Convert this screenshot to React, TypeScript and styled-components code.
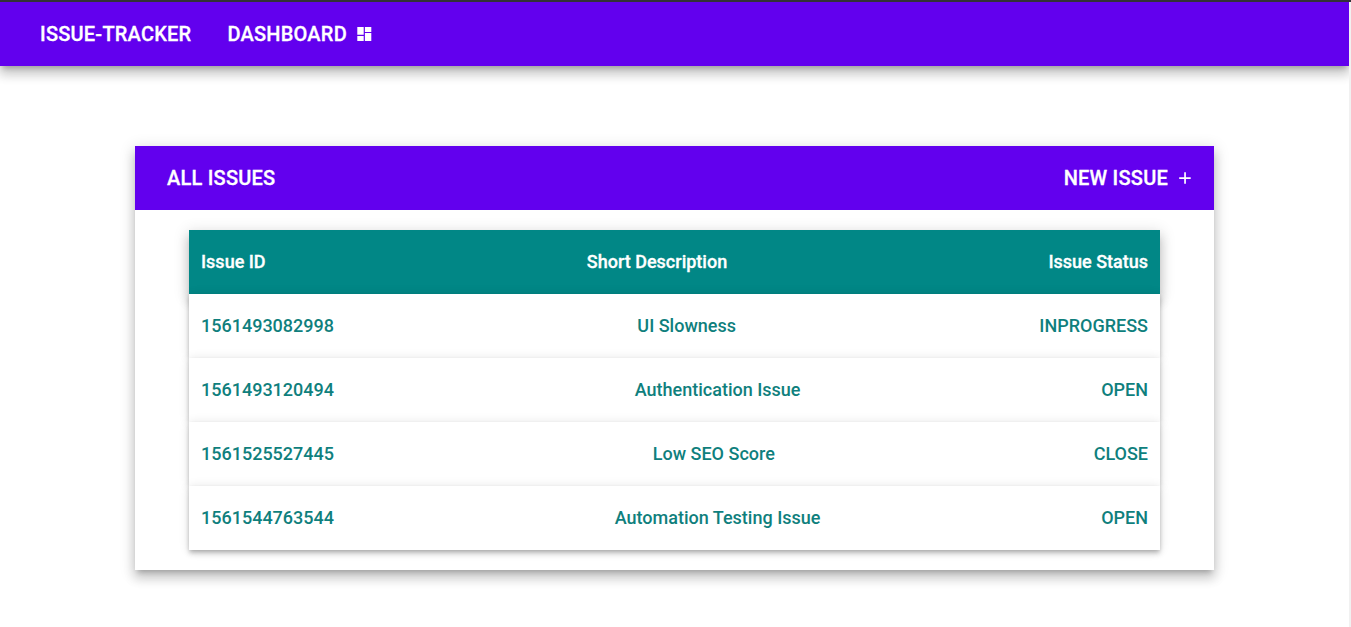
import React from 'react';
import styled, { createGlobalStyle, css } from 'styled-components';

const elevation4 = css`
  box-shadow: 0 2px 4px -1px rgba(0, 0, 0, 0.2), 0 4px 5px 0 rgba(0, 0, 0, 0.14),
    0 1px 10px 0 rgba(0, 0, 0, 0.12);
`;

const elevation8 = css`
  box-shadow: 0 5px 5px -3px rgba(0, 0, 0, 0.2), 0 8px 10px 1px rgba(0, 0, 0, 0.14),
    0 3px 14px 2px rgba(0, 0, 0, 0.12);
`;

const GlobalStyle = createGlobalStyle`
  *, *::before, *::after { box-sizing: border-box; }
  body {
    margin: 0;
    background: #fff;
    font-family: Roboto, sans-serif;
    overflow: hidden;
  }
`;

const Page = styled.div`
  height: 627px;
  display: flex;
  flex-direction: column;
  border-top: 2px solid #333138;
  overflow: hidden;
`;

const Body = styled.div`
  flex: 1;
  display: flex;
  min-height: 0;
`;

const Content = styled.div`
  flex: 1;
  overflow: hidden;
`;

const ScrollTrack = styled.div`
  width: 2px;
  background: #f1f1f1;
`;

const TopBar = styled.header`
  ${elevation8}
  height: 64px;
  padding: 0 40px;
  display: flex;
  align-items: center;
  gap: 36px;
  background: #6200ee;
`;

const Title = styled.a`
  display: flex;
  align-items: center;
  color: #fff;
  font-size: 20px;
  line-height: 32px;
  font-weight: 500;
  letter-spacing: 0.22px;
  -webkit-text-stroke: 0.3px currentColor;
  text-transform: uppercase;
  white-space: nowrap;
`;

const Icon = styled.svg`
  width: 18px;
  height: 18px;
  margin-left: 8px;
  fill: currentColor;
`;

const Card = styled.main`
  ${elevation8}
  width: 1079px;
  margin: 80px auto 0;
  padding-bottom: 20px;
  background: #fff;
`;

const CardHeader = styled.div`
  height: 64px;
  padding: 0 20px 0 32px;
  display: flex;
  align-items: center;
  justify-content: space-between;
  background: #6200ee;
`;

const IssueList = styled.div`
  width: 971px;
  margin: 20px auto 0;
`;

const Row = styled.div<{ $head?: boolean }>`
  position: relative;
  height: 64px;
  padding: 0 12px 2px;
  display: flex;
  align-items: center;
  justify-content: space-between;
  font-size: 18px;
  font-weight: 500;
  white-space: nowrap;
  ${({ $head }) =>
    $head
      ? css`
          ${elevation8}
          background: #018786;
          color: #fff;
          -webkit-text-stroke: 0.3px currentColor;
        `
      : css`
          ${elevation4}
          background: #fff;
          color: #0f7f7d;
        `}
`;

const issues = [
  { id: '1561493082998', description: 'UI Slowness', status: 'INPROGRESS' },
  { id: '1561493120494', description: 'Authentication Issue', status: 'OPEN' },
  { id: '1561525527445', description: 'Low SEO Score', status: 'CLOSE' },
  { id: '1561544763544', description: 'Automation Testing Issue', status: 'OPEN' },
];

export default function App() {
  return (
    <>
      <GlobalStyle />
      <Page>
        <Body>
          <Content>
            <TopBar>
              <Title>Issue-Tracker</Title>
              <Title>
                Dashboard
                <Icon viewBox="0 0 18 18">
                  <path d="M2.3 2h6.4v7.7H2.3zM2.3 10.9h6.4V16H2.3zM9.9 8.1h6.4V16H9.9zM9.9 2h6.4v4.9H9.9z" />
                </Icon>
              </Title>
            </TopBar>
            <Card>
              <CardHeader>
                <Title>All Issues</Title>
                <Title>
                  New Issue
                  <Icon viewBox="0 0 18 18">
                    <path d="M14.7 9.9H9.9v4.8H8.2V9.9H3.2V8.2h5V3.3h1.7v4.9h4.8z" />
                  </Icon>
                </Title>
              </CardHeader>
              <IssueList>
                <Row $head>
                  <span>Issue ID</span>
                  <span>Short Description</span>
                  <span>Issue Status</span>
                </Row>
                {issues.map((issue) => (
                  <Row key={issue.id}>
                    <span>{issue.id}</span>
                    <span>{issue.description}</span>
                    <span>{issue.status}</span>
                  </Row>
                ))}
              </IssueList>
            </Card>
          </Content>
          <ScrollTrack />
        </Body>
      </Page>
    </>
  );
}
